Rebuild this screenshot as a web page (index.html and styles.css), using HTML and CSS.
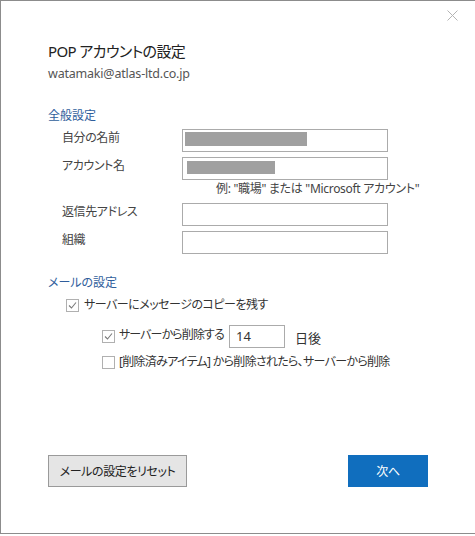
FILE: index.html
```html
<!DOCTYPE html>
<html lang="ja">
<head>
<meta charset="utf-8">
<link rel="stylesheet" href="styles.css">
</head>
<body>
<div class="dialog">
  <span class="close">
    <svg width="11" height="11" viewBox="0 0 11 11"><path d="M0.5 0.5 L10.5 10.5 M10.5 0.5 L0.5 10.5" stroke="#b4b4b4" stroke-width="1" fill="none"/></svg>
  </span>
  <div class="title">POP アカウントの設定</div>
  <div class="email">watamaki@atlas-ltd.co.jp</div>

  <div class="section">全般設定</div>
  <div class="form">
    <div class="row">
      <div class="label">自分の名前</div>
      <div class="input"><span class="redact r1"></span></div>
    </div>
    <div class="row">
      <div class="label">アカウント名</div>
      <div class="input"><span class="redact r2"></span></div>
    </div>
    <div class="hint">例: "職場" または "Microsoft アカウント"</div>
    <div class="row">
      <div class="label">返信先アドレス</div>
      <div class="input"></div>
    </div>
    <div class="row row-last">
      <div class="label">組織</div>
      <div class="input"></div>
    </div>
  </div>

  <div class="section section-mail">メールの設定</div>
  <div class="check-row lvl1">
    <span class="cb"><svg width="11" height="11" viewBox="0 0 11 11"><path d="M2 5.5 L4.5 8 L9 2.5" stroke="#7a7a7a" stroke-width="1.1" fill="none"/></svg></span>
    <span>サーバーにメッセージのコピーを残す</span>
  </div>
  <div class="check-row lvl2 days-row">
    <span class="cb"><svg width="11" height="11" viewBox="0 0 11 11"><path d="M2 5.5 L4.5 8 L9 2.5" stroke="#7a7a7a" stroke-width="1.1" fill="none"/></svg></span>
    <span class="days-label">サーバーから削除する</span>
    <div class="days">14</div>
    <span class="days-unit">日後</span>
  </div>
  <div class="check-row lvl2 last-check">
    <span class="cb"></span>
    <span>[削除済みアイテム] から削除されたら、サーバーから削除</span>
  </div>

  <div class="footer">
    <button class="btn btn-reset">メールの設定をリセット</button>
    <button class="btn btn-next">次へ</button>
  </div>
</div>
</body>
</html>
```
FILE: styles.css
```css
html, body {
  margin: 0;
  padding: 0;
  background: #ffffff;
}
body {
  width: 475px;
  height: 536px;
  overflow: hidden;
  font-family: "Noto Sans", "Noto Sans CJK JP", sans-serif;
  font-feature-settings: "palt";
  color: #333;
}
.dialog {
  position: relative;
  box-sizing: border-box;
  width: 475px;
  height: 534px;
  border-top: 1px solid #8c8c8c;
  border-left: 1px solid #8c8c8c;
  border-bottom: 1px solid #8c8c8c;
  padding: 0 47px 46px 47px;
  display: flex;
  flex-direction: column;
}
.close {
  position: absolute;
  top: 9px;
  right: 17px;
  width: 11px;
  height: 11px;
  display: block;
}
.close svg { display: block; }
.title {
  margin-top: 40px;
  font-size: 15px;
  line-height: 20px;
  letter-spacing: -0.6px;
  color: #222;
}
.email {
  margin-top: 4px;
  font-size: 12.5px;
  line-height: 18px;
  letter-spacing: -0.2px;
  color: #555;
}
.section {
  margin-top: 24px;
  font-size: 12px;
  line-height: 18px;
  color: #2f5e9c;
}
.section-mail {
  margin-top: 20px;
}
.form {
  margin-top: 4px;
  display: flex;
  flex-direction: column;
}
.row {
  display: flex;
  align-items: flex-start;
  height: 23px;
  margin-bottom: 5px;
}
.row:nth-child(2) { margin-bottom: 0; }
.row-last { margin-bottom: 0; }
.label {
  width: 134px;
  padding-left: 14px;
  box-sizing: border-box;
  font-size: 12px;
  line-height: 16px;
  padding-top: 1px;
  letter-spacing: -0.4px;
  color: #444;
}
.input {
  box-sizing: border-box;
  width: 206px;
  height: 23px;
  border: 1px solid #ababab;
  background: #fff;
  display: flex;
  align-items: flex-start;
}
.redact {
  display: block;
  background: #a0a0a0;
}
.r1 {
  width: 122px;
  height: 14px;
  margin: 2px 0 0 2px;
}
.r2 {
  width: 88px;
  height: 13px;
  margin: 3px 0 0 4px;
}
.hint {
  height: 23px;
  padding-left: 168px;
  font-size: 12px;
  line-height: 18px;
  letter-spacing: -0.3px;
  color: #444;
  white-space: nowrap;
}
.check-row {
  display: flex;
  align-items: center;
  font-size: 12px;
  line-height: 18px;
  letter-spacing: -0.5px;
  color: #333;
  white-space: nowrap;
}
.lvl1 {
  margin-top: 4px;
  padding-left: 18px;
}
.lvl2 {
  padding-left: 54px;
  letter-spacing: -0.7px;
}
.days-row {
  margin-top: 11px;
  height: 23px;
}
.last-check {
  margin-top: 5px;
}
.cb {
  box-sizing: border-box;
  width: 13px;
  height: 13px;
  border: 1px solid #b0b0b0;
  background: #fff;
  margin-right: 5px;
  display: flex;
  align-items: center;
  justify-content: center;
  flex: none;
}
.cb svg { display: block; }
.lvl2 .cb { margin-right: 4px; }
.days-label {
  width: 110px;
  margin-top: -3px;
  letter-spacing: -0.9px;
}
.days {
  box-sizing: border-box;
  width: 56px;
  height: 23px;
  border: 1px solid #ababab;
  padding-left: 6px;
  font-size: 13px;
  line-height: 21px;
  letter-spacing: 0;
  color: #333;
}
.days-unit {
  margin-left: 10px;
  font-size: 13px;
  margin-top: 2px;
  letter-spacing: 0;
}
.footer {
  margin-top: auto;
  display: flex;
  justify-content: space-between;
  align-items: center;
}
.btn {
  box-sizing: border-box;
  height: 32px;
  font-family: "Noto Sans", "Noto Sans CJK JP", sans-serif;
  font-feature-settings: "palt";
  font-size: 12px;
  letter-spacing: -0.4px;
  padding: 0;
  margin: 0;
  cursor: default;
}
.btn-reset {
  width: 139px;
  background: #e5e5e5;
  border: 1px solid #9a9a9a;
  color: #222;
}
.btn-next {
  width: 80px;
  background: #106ebe;
  border: 1px solid #106ebe;
  color: #fff;
}
```
